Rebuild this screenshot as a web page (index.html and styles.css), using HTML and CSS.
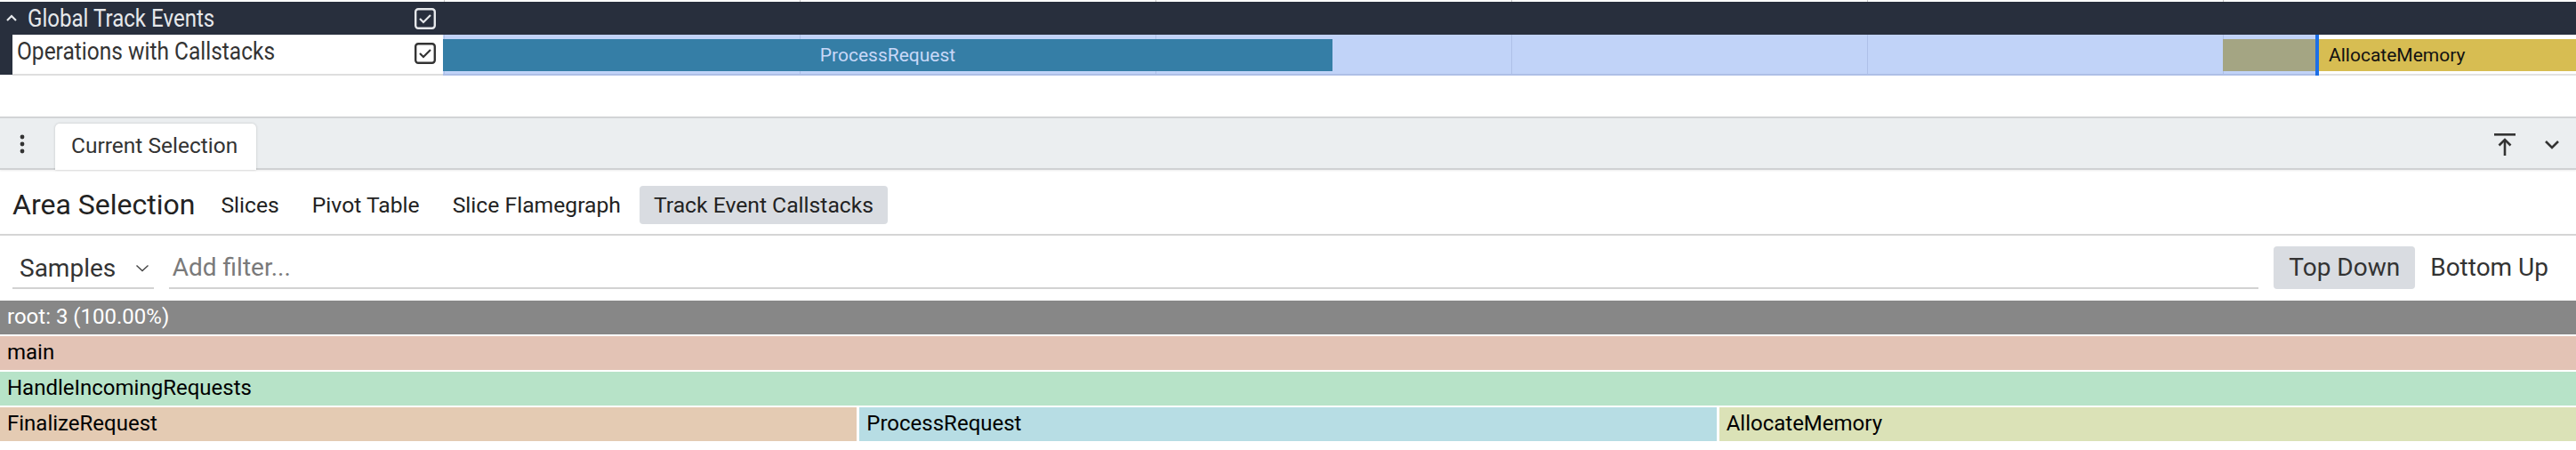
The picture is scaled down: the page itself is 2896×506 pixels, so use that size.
FILE: index.html
```html
<!DOCTYPE html>
<html>
<head>
<meta charset="utf-8">
<link rel="stylesheet" href="styles.css">
</head>
<body>
<div class="page">
  <div class="top-strip">
    <div class="shell-space"></div>
    <div class="grid-lines"></div>
  </div>

  <div class="group-header">
    <div class="shell dark">
      <div class="shell-title">
        <svg class="chev-up" width="14" height="10" viewBox="0 0 14 10"><polyline points="2,8 7,3 12,8" fill="none" stroke="#e6e8eb" stroke-width="2.2"/></svg>
        <span class="cond">Global Track Events</span>
      </div>
      <svg class="cb" width="24" height="24" viewBox="0 0 24 24"><rect x="1.2" y="1.2" width="21.6" height="21.6" rx="3" fill="#282f3d" stroke="#e6e8eb" stroke-width="2.4"/><polyline points="6,12 10,16 18,8" fill="none" stroke="#e6e8eb" stroke-width="2.2"/></svg>
    </div>
    <div class="track-fill"></div>
  </div>

  <div class="track-row">
    <div class="indent"></div>
    <div class="shell light">
      <span class="cond">Operations with Callstacks</span>
      <svg class="cb" width="24" height="24" viewBox="0 0 24 24"><rect x="1.2" y="1.2" width="21.6" height="21.6" rx="3" fill="#fff" stroke="#333" stroke-width="2.4"/><polyline points="6,12 10,16 18,8" fill="none" stroke="#333" stroke-width="2.2"/></svg>
    </div>
    <div class="track">
      <div class="sel-area"></div>
      <div class="sel-line"></div>
      <div class="slice s-process">ProcessRequest</div>
      <div class="slice s-olive"></div>
      <div class="slice s-alloc">AllocateMemory</div>
    </div>
  </div>

  <div class="gap"></div>

  <div class="tabbar">
    <div class="kebab">
      <svg width="8" height="22" viewBox="0 0 8 22"><circle cx="4" cy="3" r="2.4" fill="#333"/><circle cx="4" cy="11" r="2.4" fill="#333"/><circle cx="4" cy="19" r="2.4" fill="#333"/></svg>
    </div>
    <div class="tab">Current Selection</div>
    <div class="tabbar-spacer"></div>
    <div class="tab-icons">
      <svg width="24" height="26" viewBox="0 0 24 26"><rect x="0" y="0" width="24" height="2.6" fill="#333"/><line x1="12" y1="7" x2="12" y2="25" stroke="#333" stroke-width="2.6"/><polyline points="5.5,13.5 12,7 18.5,13.5" fill="none" stroke="#333" stroke-width="2.6"/></svg>
      <svg width="18" height="12" viewBox="0 0 18 12"><polyline points="2,2 9,9 16,2" fill="none" stroke="#333" stroke-width="2.6"/></svg>
    </div>
  </div>

  <div class="area-row">
    <div class="area-title">Area Selection</div>
    <div class="area-tabs">
      <div class="btn">Slices</div>
      <div class="btn">Pivot Table</div>
      <div class="btn">Slice Flamegraph</div>
      <div class="btn active">Track Event Callstacks</div>
    </div>
  </div>

  <div class="filter-row">
    <div class="select">
      <span>Samples</span>
      <svg width="16" height="9" viewBox="0 0 16 9"><polyline points="1.5,1.5 8,7.5 14.5,1.5" fill="none" stroke="#444" stroke-width="1.4"/></svg>
    </div>
    <div class="filter-input">Add filter...</div>
    <div class="mode-btns">
      <div class="btn big active">Top Down</div>
      <div class="btn big">Bottom Up</div>
    </div>
  </div>

  <div class="flame">
    <div class="frow"><div class="fnode root">root: 3 (100.00%)</div></div>
    <div class="frow"><div class="fnode c-main">main</div></div>
    <div class="frow"><div class="fnode c-handle">HandleIncomingRequests</div></div>
    <div class="frow">
      <div class="fnode c-final">FinalizeRequest</div>
      <div class="fnode c-proc">ProcessRequest</div>
      <div class="fnode c-alloc">AllocateMemory</div>
    </div>
  </div>
</div>
</body>
</html>
```

FILE: styles.css
```css
* { box-sizing: border-box; }
html, body { margin: 0; padding: 0; background: #fff; }
body {
  width: 2896px;
  height: 506px;
  overflow: hidden;
  font-family: Roboto, "Noto Sans", sans-serif;
  color: #333;
}
.page { display: flex; flex-direction: column; width: 2896px; }

/* top strip */
.top-strip { display: flex; height: 2px; }
.shell-space { width: 498px; flex: none; }
.grid-lines {
  flex: 1;
  background: repeating-linear-gradient(to right, #c8c8c8 0 1px, transparent 1px 400px);
  background-position: 1px 0;
}

/* group header */
.group-header { display: flex; height: 37px; background: #282f3d; }
.shell {
  width: 498px;
  flex: none;
  display: flex;
  align-items: center;
  justify-content: space-between;
  padding-right: 8px;
}
.shell.dark { padding-left: 6px; color: #e6e8eb; }
.shell-title { display: flex; align-items: center; gap: 11px; }
.chev-up { margin-top: -2px; }
.cond {
  display: inline-block;
  font-size: 28px;
  transform: scaleX(0.86);
  transform-origin: left center;
  white-space: nowrap;
  line-height: 1;
}
.shell.light .cond { font-size: 28.5px; transform: scaleX(0.86); }
.shell .cb { flex: none; margin-right: 0; }
.track-fill { flex: 1; }

/* track row */
.track-row { display: flex; height: 46px; }
.indent { width: 14px; flex: none; background: #282f3d; height: 45px; }
.shell.light {
  width: 484px;
  padding-left: 5px;
  background: #fff;
  border-bottom: 2px solid #dedede;
  color: #333;
  align-items: center;
  padding-bottom: 5px;
}
.shell.light .cb { margin-top: 3px; }
.track { flex: 1; position: relative; background: #fff; border-bottom: 2px solid #e2e2e2; }
.sel-area {
  position: absolute;
  left: 0; top: 0;
  width: 2106px;
  height: 46px;
  background-color: #c1d3f8;
  background-image: repeating-linear-gradient(to right, #aec0e8 0 1px, transparent 1px 400px);
  background-position: 1px 0;
  border-bottom: 2px solid #aebfe6;
}
.sel-line {
  position: absolute;
  left: 2105px; top: 0;
  width: 4px; height: 46px;
  background: #1d6fe6;
  z-index: 2;
}
.slice {
  position: absolute;
  top: 5px;
  height: 36px;
  font-size: 21px;
  line-height: 36px;
  white-space: nowrap;
  overflow: hidden;
}
.s-process { left: 0; width: 1000px; background: #357ea6; color: #c8d8f8; text-align: center; }
.s-olive { left: 2001px; width: 106px; background: #a4a583; }
.s-alloc { left: 2109px; right: 0; background: #d7bd52; color: #111; padding-left: 11px; }

.gap { height: 46px; }

/* tab bar */
.tabbar {
  display: flex;
  align-items: flex-end;
  height: 60px;
  background: #ebeef0;
  border-top: 2px solid #d2d4d6;
  border-bottom: 2px solid #cfd1d3;
  box-shadow: 0 1px 2px rgba(0,0,0,0.08);
}
.kebab { width: 62px; align-self: center; display: flex; justify-content: center; padding-right: 12px; padding-top: 2px; }
.tab {
  width: 226px;
  height: 52px;
  background: #fff;
  border-radius: 5px 5px 0 0;
  box-shadow: 0 0 3px rgba(0,0,0,0.18);
  font-size: 24.5px;
  line-height: 50px;
  padding-left: 18px;
  color: #333;
  margin-bottom: -2px;
  position: relative;
}
.tabbar-spacer { flex: 1; }
.tab-icons { align-self: center; display: flex; align-items: center; gap: 32px; padding-right: 18px; padding-top: 4px; }

/* area row */
.area-row {
  display: flex;
  align-items: center;
  height: 74px;
  padding-left: 14px;
  padding-top: 6px;
  border-bottom: 2px solid #d5d5d5;
}
.area-title { font-size: 32px; color: #222; margin-right: 13px; }
.area-tabs { display: flex; gap: 5px; }
.btn {
  font-size: 24.7px;
  padding: 0 16px;
  height: 43px;
  line-height: 43px;
  border-radius: 4px;
  color: #222;
  white-space: nowrap;
}
.btn.active { background: #d9dce1; }

/* filter row */
.filter-row {
  display: flex;
  align-items: center;
  height: 72px;
  padding: 0 14px;
  gap: 17px;
}
.select {
  width: 159px;
  height: 45px;
  display: flex;
  align-items: center;
  justify-content: space-between;
  padding: 0 5px 0 8px;
  border-bottom: 2px solid #d2d2d2;
  font-size: 28px;
  color: #333;
  margin-top: 2px;
}
.filter-input {
  width: 2353px;
  height: 45px;
  line-height: 42px;
  font-size: 28px;
  color: #7a7a7a;
  padding-left: 4px;
  border-bottom: 2px solid #d2d2d2;
  margin-top: 2px;
}
.mode-btns { display: flex; margin-left: 0; }
.btn.big { font-size: 28px; height: 48px; line-height: 48px; padding: 0 17px; color: #333; }

/* flamegraph */
.flame { display: flex; flex-direction: column; gap: 2px; padding-top: 1px; }
.frow { display: flex; gap: 3px; height: 38px; }
.fnode {
  flex: 1;
  font-size: 24px;
  line-height: 37px;
  padding-left: 8px;
  color: #000;
  white-space: nowrap;
  overflow: hidden;
}
.root { background: #878787; color: #fff; }
.c-main { background: #e3c3b5; }
.c-handle { background: #b7e3c8; }
.c-final { background: #e4cbb3; }
.c-proc { background: #b7dde4; }
.c-alloc { background: #dbe2b7; }
```
